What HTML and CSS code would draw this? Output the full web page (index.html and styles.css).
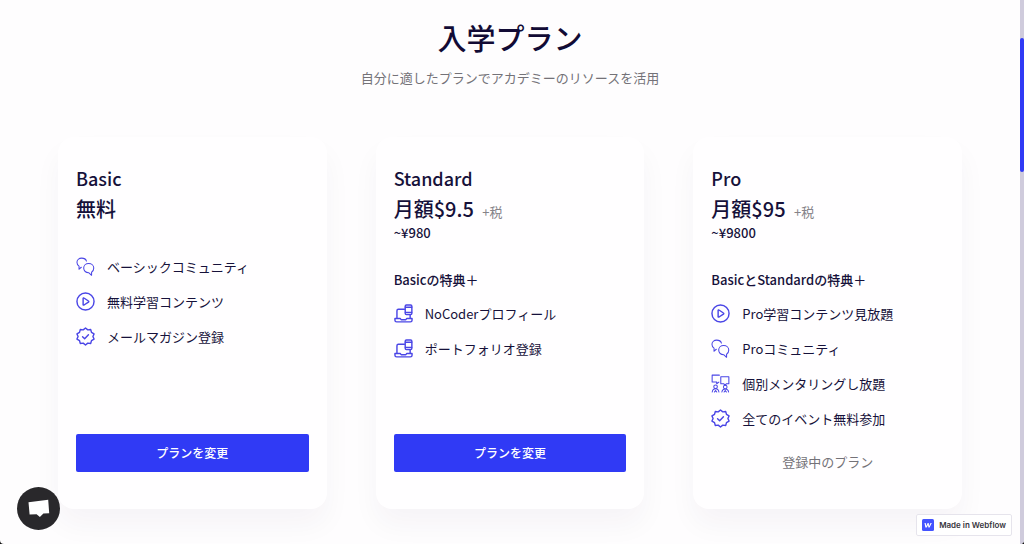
FILE: index.html
```
<!DOCTYPE html>
<html lang="ja">
<head>
<meta charset="utf-8">
<meta name="viewport" content="width=device-width, initial-scale=1">
<title>入学プラン</title>
<link rel="stylesheet" href="styles.css">
</head>
<body>
<svg class="sprite" aria-hidden="true">
  <symbol id="chat" viewBox="0 0 20 20">
    <path d="M3.2 12.8V9.6A4.8 4.8 0 0 1 1 5.500C1 3 3.200 1.200 6 1.200c2.400 0 4.400 1.200 5 3.100M3.200 12.800l2.400-2"/>
    <path d="M13.300 6.900c3.100 0 5.400 2 5.400 4.800 0 2-1 3.500-2.300 4.300v3.300l-2.800-2.700c-3.200.1-5.500-2-5.500-4.900 0-2.800 2.200-4.800 5.200-4.800z"/>
  </symbol>
  <symbol id="play" viewBox="0 0 20 20">
    <circle cx="10" cy="10" r="9"/>
    <path d="M7.500 6.700v6.600c0 .5.500.6.900.4l4.700-3.100c.5-.3.500-.8 0-1.100L8.400 6.300c-.4-.3-.9-.1-.9.400z"/>
  </symbol>
  <symbol id="check" viewBox="0 0 20 20">
    <path d="M10 1l2.400 2 3.100-.3.800 3 2.700 1.600L17.800 10l1.200 2.700-2.700 1.600-.8 3-3.100-.3L10 19l-2.400-2-3.100.3-.8-3L1 12.700 2.200 10 1 7.300l2.700-1.600.8-3 3.100.3z"/>
    <path d="M6.900 10.300l2.200 2.100 4-4.200"/>
  </symbol>
  <symbol id="devices" viewBox="0 0 20 20">
    <path d="M11 5.500H4.600c-.9 0-1.500.6-1.500 1.500v8M17 11.500V15"/>
    <rect x="11.800" y="1" width="7" height="10" rx="1.300"/>
    <path d="M12 3.500h6.600M12 8.800h6.600M1 15.200h5.500l1 1.300h5l1-1.300H19v1.800c0 1.100-.7 1.800-1.800 1.800H2.800C1.700 18.800 1 18.100 1 17z"/>
  </symbol>
  <symbol id="mentoring" viewBox="0 0 20 20">
    <path d="M8.300 8.500L6 10.300V8.500H1.200V1.200h7.600M10.300 3h8.500v7.200h-2.500l-1.500 1.700-1.500-1.700h-3z"/>
    <circle cx="4.800" cy="13.500" r="1.900"/>
    <circle cx="15" cy="13.800" r="1.900"/>
    <path d="M1.300 19c.2-2 1.500-3.500 3.500-3.500s3.300 1.500 3.500 3.500M3.600 19l1.200-1.700L6 19M11.500 19c.2-2 1.500-3.300 3.500-3.300s3.300 1.300 3.500 3.300M13.800 19l1.200-1.700 1.200 1.700"/>
  </symbol>
</svg>
<div class="page">
  <main class="content">
    <header class="intro">
      <h1 class="title">入学プラン</h1>
      <p class="subtitle">自分に適したプランでアカデミーのリソースを活用</p>
    </header>
    <div class="plans">
      <section class="plan">
        <h2 class="name">Basic</h2>
        <p class="price">無料</p>
        <ul class="features features-lead">
          <li class="feature"><svg class="icon fine"><use href="#chat"/></svg>ベーシックコミュニティ</li>
          <li class="feature"><svg class="icon"><use href="#play"/></svg>無料学習コンテンツ</li>
          <li class="feature"><svg class="icon"><use href="#check"/></svg>メールマガジン登録</li>
        </ul>
        <div class="action"><button class="change" type="button">プランを変更</button></div>
      </section>
      <section class="plan">
        <h2 class="name">Standard</h2>
        <p class="price">月額$9.5 <span class="tax">+税</span></p>
        <p class="yen">~¥980</p>
        <h3 class="perks">Basicの特典＋</h3>
        <ul class="features">
          <li class="feature"><svg class="icon"><use href="#devices"/></svg>NoCoderプロフィール</li>
          <li class="feature"><svg class="icon"><use href="#devices"/></svg>ポートフォリオ登録</li>
        </ul>
        <div class="action"><button class="change" type="button">プランを変更</button></div>
      </section>
      <section class="plan">
        <h2 class="name">Pro</h2>
        <p class="price">月額$95 <span class="tax">+税</span></p>
        <p class="yen">~¥9800</p>
        <h3 class="perks">BasicとStandardの特典＋</h3>
        <ul class="features">
          <li class="feature"><svg class="icon"><use href="#play"/></svg>Pro学習コンテンツ見放題</li>
          <li class="feature"><svg class="icon fine"><use href="#chat"/></svg>Proコミュニティ</li>
          <li class="feature"><svg class="icon fine"><use href="#mentoring"/></svg>個別メンタリングし放題</li>
          <li class="feature"><svg class="icon"><use href="#check"/></svg>全てのイベント無料参加</li>
        </ul>
        <div class="action"><p class="current">登録中のプラン</p></div>
      </section>
    </div>
  </main>
  <div class="track"><div class="thumb"></div></div>
</div>
<button class="chat-button" type="button" aria-label="チャット">
  <svg class="chat-glyph" viewBox="0 0 22 20"><path d="M.5 3.300L20.200.8l1 13.400-5.800.4-3.500 3.300-3.300-2.600-7 .3z"/></svg>
</button>
<a class="badge" href="#">
  <svg class="badge-logo" viewBox="0 0 12 12"><rect width="12" height="12" rx="1.500" fill="#4353ff"/><path d="M2.500 4h1.200l.5 3 1.500-3h1l.4 3 1.400-3h1.300L7.600 8.500H6.400L6 6 4.700 8.500H3.400z" fill="#fff"/></svg>
  Made in Webflow
</a>
</body>
</html>
```
FILE: styles.css
```
* { box-sizing: border-box; }
html { background: #111; }
body {
  margin: 0;
  font-family: "Noto Sans CJK JP", "Noto Sans", sans-serif;
  font-size: 13px;
  line-height: 20px;
  color: #16113a;
}
h1, h2, h3, p, ul { margin: 0; padding: 0; }
.sprite { display: none; }
.page {
  display: flex;
  min-height: 100vh;
  background: #fefdfe;
  border-radius: 0 0 4px 4px;
  overflow: hidden;
}
.content { flex: 1; padding: 16px 58px 34px; }
.intro { text-align: center; }
.title { font-size: 29px; line-height: 42px; font-weight: 500; color: #120b35; }
.subtitle { margin-top: 10px; color: #747278; }
.plans {
  display: grid;
  grid-template-columns: repeat(3, 1fr);
  gap: 49px;
  margin-top: 49px;
}
.plan {
  display: flex;
  flex-direction: column;
  padding: 26px 18px 37px;
  border-radius: 16px;
  background: #fffeff;
  box-shadow: 0 16px 28px rgba(50, 25, 70, 0.04);
}
.name { font-size: 18px; line-height: 30px; font-weight: 500; }
.price { font-size: 20px; line-height: 32px; font-weight: 500; }
.tax { margin-left: 4px; font-size: 13px; font-weight: 400; color: #858389; }
.yen { margin-top: -5px; font-weight: 500; }
.perks { margin: 27px 0 6px; font-size: 13px; font-weight: 500; }
.features { list-style: none; }
.features-lead { margin-top: 24px; }
.feature { display: flex; align-items: center; gap: 12px; height: 35px; }
.icon {
  width: 19px;
  height: 19px;
  flex: none;
  fill: none;
  stroke: #4a45e6;
  stroke-width: 1.500;
  stroke-linejoin: round;
  stroke-linecap: round;
}
.fine { stroke-width: 1.100; }
.action { margin-top: auto; padding-top: 16px; }
.change {
  display: block;
  width: 100%;
  padding: 9px;
  border: 0;
  border-radius: 2px;
  background: #303af5;
  color: #fff;
  font: 500 12px/20px "Noto Sans CJK JP", sans-serif;
}
.current { text-align: center; color: #747278; }
.track { width: 4px; background: #cfcbdc; }
.thumb { height: 134px; margin-top: 38px; border-radius: 2px; background: #303af5; }
.chat-button {
  position: fixed;
  left: 17px;
  bottom: 14px;
  display: grid;
  place-items: center;
  width: 43px;
  height: 43px;
  padding: 0;
  border: 0;
  border-radius: 50%;
  background: #29282b;
}
.chat-glyph { width: 22px; height: 20px; fill: #fff; }
.badge {
  position: fixed;
  right: 12px;
  bottom: 8px;
  display: flex;
  align-items: center;
  gap: 5px;
  padding: 0 5px;
  height: 22px;
  border: 1px solid #e6e4ec;
  border-radius: 2px;
  background: #fff;
  color: #36343c;
  font: 600 8px/20px Inter, sans-serif;
  text-decoration: none;
}
.badge-logo { width: 12px; height: 12px; }
```
